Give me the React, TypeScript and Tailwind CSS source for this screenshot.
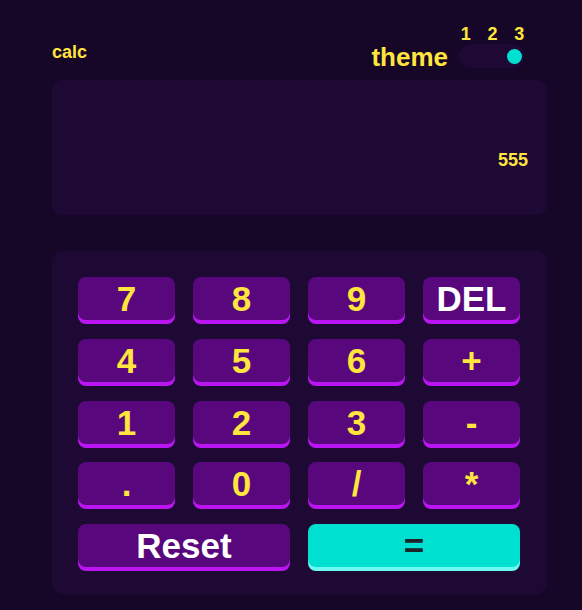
const keys: { label: string; wide?: boolean; kind?: "action" | "equals" }[] = [
  { label: "7" }, { label: "8" }, { label: "9" }, { label: "DEL", kind: "action" },
  { label: "4" }, { label: "5" }, { label: "6" }, { label: "+" },
  { label: "1" }, { label: "2" }, { label: "3" }, { label: "-" },
  { label: "." }, { label: "0" }, { label: "/" }, { label: "*" },
  { label: "Reset", wide: true, kind: "action" },
  { label: "=", wide: true, kind: "equals" },
];

function Key({ label, wide, kind }: { label: string; wide?: boolean; kind?: "action" | "equals" }) {
  const base = "h-[43px] rounded-[8px] flex items-center justify-center text-[35px] leading-[43px] font-bold";
  let look = "bg-[#58077d] shadow-[0_4px_0_#bc15f4] text-[#ffe53d]";
  if (kind === "action") look = "bg-[#58077d] shadow-[0_4px_0_#bc15f4] text-white";
  if (kind === "equals") look = "bg-[#00e0d1] shadow-[0_4px_0_#6cf9f2] text-[#1b2428]";
  return (
    <button className={`${base} ${look} ${wide ? "col-span-2" : ""}`}>
      {label}
    </button>
  );
}

export default function App() {
  return (
    <div className="min-h-screen h-[610px] bg-[#160628] font-['Liberation_Sans',Arial,sans-serif]">
      <div className="ml-[52px] w-[495px]">
        <header className="h-[80px] flex justify-between items-start pr-[19px]">
          <div className="pt-[43px] text-[18px] leading-[18px] font-bold text-[#ffe53d]">calc</div>
          <div className="pt-[25px] flex items-end">
            <span className="text-[26px] leading-[22px] font-bold text-[#ffe53d] mr-[8px]">theme</span>
            <div className="w-[72px] flex flex-col">
              <div className="flex gap-[9px] mb-[1px] pl-[1px] text-[18px] leading-[18px] font-bold text-[#ffe53d]">
                <span className="w-[18px] text-center">1</span>
                <span className="w-[18px] text-center">2</span>
                <span className="w-[18px] text-center">3</span>
              </div>
              <div className="ml-[3px] w-[65px] h-[24px] rounded-full bg-[#1d0934] flex items-center justify-end pr-[2px]">
                <div className="w-[15px] h-[15px] rounded-full bg-[#00e0d1]" />
              </div>
            </div>
          </div>
        </header>

        <div className="h-[135px] rounded-[10px] bg-[#1d0934] flex justify-end pt-[71px] pr-[19px]">
          <span className="text-[18px] leading-[18px] h-[18px] font-bold text-[#ffe53d]">555</span>
        </div>

        <div className="mt-[36px] rounded-[10px] bg-[#1d0934] pt-[26px] pb-[27px] pl-[26px] pr-[27px] grid grid-cols-4 gap-x-[18px] gap-y-[18.75px]">
          {keys.map((k) => (
            <Key key={k.label} {...k} />
          ))}
        </div>
      </div>
    </div>
  );
}
